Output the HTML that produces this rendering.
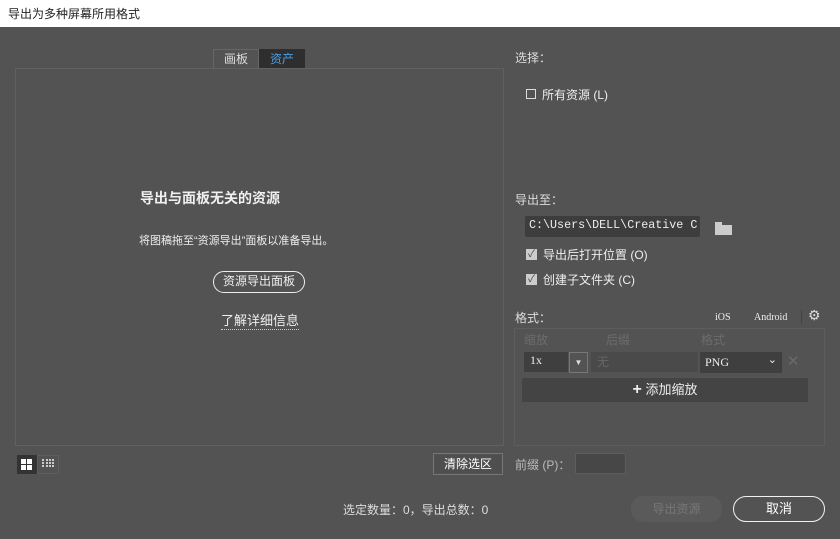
<!DOCTYPE html>
<html><head><meta charset="utf-8"><style>
*{margin:0;padding:0;box-sizing:border-box}
body{width:840px;height:539px;background:#535353;font-family:"Liberation Sans","Noto Sans CJK SC",sans-serif;color:#e0e0e0;font-size:12px;position:relative;overflow:hidden}
.a{position:absolute;white-space:nowrap}
.serif{font-family:"Liberation Serif","Noto Serif CJK SC",serif}
</style></head><body>
<div class="a" style="left:0;top:0;width:840px;height:27px;background:#fff;color:#222;font-size:12px;padding:5px 0 0 8px">导出为多种屏幕所用格式</div>

<div class="a" style="left:213px;top:49px;width:46px;height:20px;border:1px solid #666;border-bottom:none;color:#ddd;font-size:12px;text-align:center;line-height:19px">画板</div>
<div class="a" style="left:259px;top:49px;width:46px;height:20px;background:#2e2e2e;color:#4a9de0;font-size:12px;text-align:center;line-height:20px">资产</div>
<div class="a" style="left:15px;top:68px;width:489px;height:378px;border:1px solid #606060"></div>

<div class="a" style="left:140px;top:188px;font-size:14px;font-weight:bold;color:#f0f0f0">导出与面板无关的资源</div>
<div class="a" style="left:139px;top:232px;font-size:11px;color:#eee">将图稿拖至“资源导出”面板以准备导出。</div>
<div class="a" style="left:213px;top:271px;width:92px;height:22px;border:1.5px solid #eee;border-radius:11px;font-size:12px;text-align:center;line-height:19px;color:#eee">资源导出面板</div>
<div class="a" style="left:221px;top:313px;font-size:13px;color:#eee;border-bottom:1px dotted #ccc;line-height:16px">了解详细信息</div>

<div class="a" style="left:17px;top:455px;width:20px;height:19px;background:#333"></div>
<div class="a" style="left:21px;top:459px;width:5px;height:5px;background:#fff;box-shadow:6px 0 #fff,0 6px #fff,6px 6px #fff"></div>
<div class="a" style="left:37px;top:455px;width:22px;height:19px;border:1px solid #5e5e5e"></div>
<div class="a" style="left:42px;top:459px;width:2px;height:2px;background:#ccc;box-shadow:0 3px #ccc,0 6px #ccc,4px 0 #ccc,4px 3px #ccc,4px 6px #ccc,7px 0 #ccc,7px 3px #ccc,7px 6px #ccc,10px 0 #ccc,10px 3px #ccc,10px 6px #ccc"></div>

<div class="a" style="left:433px;top:453px;width:70px;height:22px;border:1px solid #777;background:#4f4f4f;color:#fff;font-size:12px;text-align:center;line-height:20px">清除选区</div>

<div class="a" style="left:515px;top:49px;font-size:12px;color:#ddd">选择：</div>
<div class="a" style="left:526px;top:89px;width:10px;height:10px;border:1px solid #ddd"></div>
<div class="a" style="left:542px;top:86px;font-size:12px;color:#eee">所有资源 (L)</div>

<div class="a" style="left:515px;top:191px;font-size:12px;color:#ddd">导出至：</div>
<div class="a" style="left:525px;top:216px;width:175px;height:21px;background:#3d3d3d;border-radius:2px;color:#eee;font-family:'Liberation Mono',monospace;font-size:11.7px;padding:2px 0 0 4px;overflow:hidden">C:\Users\DELL\Creative C</div>
<div class="a" style="left:715px;top:225px;width:17px;height:10px;background:#ccc"></div>
<div class="a" style="left:715px;top:222px;width:7px;height:3px;background:#ccc"></div>
<div class="a" style="left:526px;top:249px;width:11px;height:11px;background:#ccc;color:#444;font-size:10px;line-height:11px;text-align:center">✓</div>
<div class="a" style="left:543px;top:246px;font-size:12px;color:#eee">导出后打开位置 (O)</div>
<div class="a" style="left:526px;top:274px;width:11px;height:11px;background:#ccc;color:#444;font-size:10px;line-height:11px;text-align:center">✓</div>
<div class="a" style="left:543px;top:271px;font-size:12px;color:#eee">创建子文件夹 (C)</div>

<div class="a" style="left:515px;top:309px;font-size:12px;color:#ddd">格式：</div>
<div class="a serif" style="left:715px;top:312px;font-size:10px;color:#eee">iOS</div>
<div class="a serif" style="left:754px;top:312px;font-size:10px;color:#eee">Android</div>
<div class="a" style="left:801px;top:310px;width:1px;height:14px;background:#444"></div>
<div class="a" style="left:808px;top:307px;font-size:14px;color:#ddd">⚙</div>
<div class="a" style="left:514px;top:328px;width:311px;height:118px;border:1px solid #5d5d5d"></div>
<div class="a" style="left:524px;top:331px;font-size:12px;color:#6c6c6c">缩放</div>
<div class="a" style="left:606px;top:331px;font-size:12px;color:#6c6c6c">后缀</div>
<div class="a" style="left:701px;top:331px;font-size:12px;color:#6c6c6c">格式</div>
<div class="a serif" style="left:524px;top:352px;width:44px;height:20px;background:#3f3f3f;color:#eee;font-size:12px;padding:1px 0 0 6px">1x</div>
<div class="a" style="left:569px;top:352px;width:19px;height:21px;border:1px solid #777;color:#ddd;font-size:8px;text-align:center;line-height:20px">▼</div>
<div class="a" style="left:591px;top:352px;width:107px;height:20px;background:#4a4a4a;color:#666;font-size:12px;padding:1px 0 0 6px">无</div>
<div class="a serif" style="left:700px;top:352px;width:82px;height:21px;background:#3f3f3f;color:#eee;font-size:12px;padding:3px 0 0 5px">PNG<span style="position:absolute;right:5px;top:1px;font-size:11px">⌄</span></div>
<div class="a" style="left:787px;top:352px;font-size:15px;color:#6a6a6a">✕</div>
<div class="a" style="left:522px;top:378px;width:286px;height:24px;background:#444;color:#eee;font-size:13px;text-align:center;line-height:23px"><b style="font-size:16px">+</b> 添加缩放</div>

<div class="a" style="left:515px;top:456px;font-size:12px;color:#bbb">前缀 (P)：</div>
<div class="a" style="left:575px;top:453px;width:51px;height:21px;background:#474747;border:1px solid #5e5e5e;border-radius:2px"></div>

<div class="a" style="left:343px;top:501px;font-size:12px;color:#ddd">选定数量：0，导出总数：0</div>
<div class="a" style="left:631px;top:496px;width:91px;height:26px;background:#5a5a5a;border-radius:12px;color:#777;font-size:12px;text-align:center;line-height:26px">导出资源</div>
<div class="a" style="left:733px;top:496px;width:92px;height:26px;border:1.5px solid #f2f2f2;border-radius:13px;color:#fff;font-size:13px;text-align:center;line-height:23px">取消</div>
</body></html>
